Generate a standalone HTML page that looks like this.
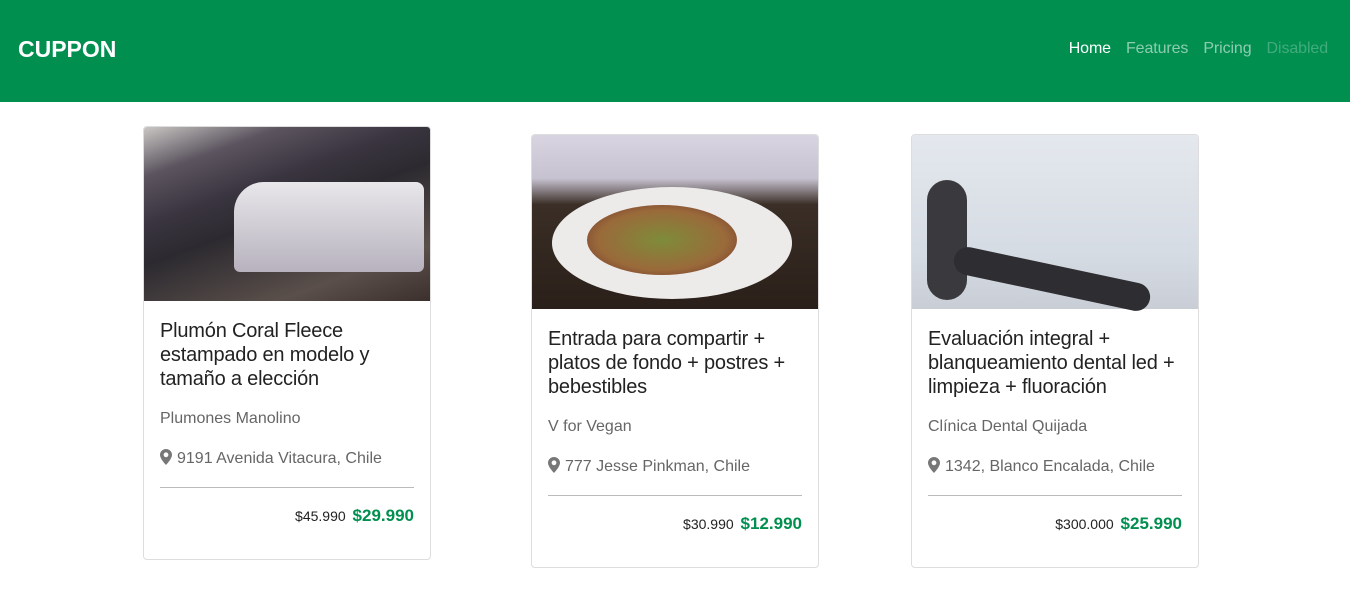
<!DOCTYPE html>
<html><head><meta charset="utf-8"><style>
*{box-sizing:border-box;margin:0;padding:0}
body{width:1350px;height:614px;background:#fff;font-family:"Liberation Sans",sans-serif;position:relative;overflow:hidden}
.nav{position:absolute;left:0;top:0;width:1350px;height:102px;background:#008f4f}
.brand{position:absolute;left:18px;top:36px;color:#fff;font-weight:bold;font-size:23px}
.links{position:absolute;right:22px;top:40px;font-size:16px;letter-spacing:-0.1px}
.links span{margin-left:15px;color:rgba(255,255,255,.55)}
.links span.a{color:#fff}
.links span.d{color:rgba(255,255,255,.25)}
.card{position:absolute;width:288px;height:434px;border:1px solid #ddd;border-radius:4px;background:#fff}
.img{height:174px;border-radius:3px 3px 0 0}
.body{padding:18px 16px 16px}
.t{font-size:20px;line-height:24px;color:#222;letter-spacing:-0.2px}
.s{font-size:16px;color:#666;margin-top:16px;line-height:24px}
.l{font-size:16px;color:#666;margin-top:16px;line-height:24px}
.pin{display:inline-block;width:12px;height:16px;vertical-align:-2px;margin-right:5px}
hr{border:0;border-top:1px solid #bbb;margin-top:16px}
.p{text-align:right;margin-top:18px;font-size:14px;color:#222}
.p b{color:#008f4f;font-size:17px;margin-left:3px}
</style></head><body>
<div class="nav"><div class="brand">CUPPON</div>
<div class="links"><span class="a">Home</span><span>Features</span><span>Pricing</span><span class="d">Disabled</span></div></div>

<div class="card" style="left:143px;top:126px">
<div class="img" style="background:linear-gradient(160deg,#c9c7c4 0%,#5c5560 18%,#3a3540 35%,#2c2a30 50%,#5a4f4a 80%,#3c302c 100%);position:relative"><div style="position:absolute;left:90px;top:55px;width:190px;height:90px;background:linear-gradient(180deg,#e8e7ea,#b7b2be);border-radius:30px 8px 6px 6px"></div></div>
<div class="body"><div class="t">Plumón Coral Fleece estampado en modelo y tamaño a elección</div>
<div class="s">Plumones Manolino</div>
<div class="l"><svg class="pin" viewBox="0 0 12 16"><path d="M6 0C2.7 0 0 2.6 0 5.8 0 10 6 16 6 16s6-6 6-10.2C12 2.6 9.3 0 6 0zm0 8.2A2.4 2.4 0 1 1 6 3.4a2.4 2.4 0 0 1 0 4.8z" fill="#777"/></svg>9191 Avenida Vitacura, Chile</div>
<hr><div class="p">$45.990 <b>$29.990</b></div></div></div>

<div class="card" style="left:531px;top:134px">
<div class="img" style="background:linear-gradient(180deg,#d8d4e0 0%,#c7c2d0 25%,#3a2e26 40%,#2a2019 100%);position:relative"><div style="position:absolute;left:20px;top:52px;width:240px;height:112px;border-radius:50%;background:#ecebea"></div><div style="position:absolute;left:55px;top:70px;width:150px;height:70px;border-radius:50%;background:radial-gradient(#7e8c3a,#9a6a3a 60%,#6a2a2a)"></div></div>
<div class="body"><div class="t">Entrada para compartir + platos de fondo + postres + bebestibles</div>
<div class="s">V for Vegan</div>
<div class="l"><svg class="pin" viewBox="0 0 12 16"><path d="M6 0C2.7 0 0 2.6 0 5.8 0 10 6 16 6 16s6-6 6-10.2C12 2.6 9.3 0 6 0zm0 8.2A2.4 2.4 0 1 1 6 3.4a2.4 2.4 0 0 1 0 4.8z" fill="#777"/></svg>777 Jesse Pinkman, Chile</div>
<hr><div class="p">$30.990 <b>$12.990</b></div></div></div>

<div class="card" style="left:911px;top:134px">
<div class="img" style="background:linear-gradient(180deg,#e4e8ee,#d5dbe3 70%,#c9ced6);position:relative"><div style="position:absolute;left:15px;top:45px;width:40px;height:120px;background:#3a3a3e;border-radius:20px"></div><div style="position:absolute;left:40px;top:130px;width:200px;height:28px;background:#2e2e32;border-radius:20px;transform:rotate(12deg)"></div></div>
<div class="body"><div class="t">Evaluación integral + blanqueamiento dental led + limpieza + fluoración</div>
<div class="s">Clínica Dental Quijada</div>
<div class="l"><svg class="pin" viewBox="0 0 12 16"><path d="M6 0C2.7 0 0 2.6 0 5.8 0 10 6 16 6 16s6-6 6-10.2C12 2.6 9.3 0 6 0zm0 8.2A2.4 2.4 0 1 1 6 3.4a2.4 2.4 0 0 1 0 4.8z" fill="#777"/></svg>1342, Blanco Encalada, Chile</div>
<hr><div class="p">$300.000 <b>$25.990</b></div></div></div>
</body></html>
